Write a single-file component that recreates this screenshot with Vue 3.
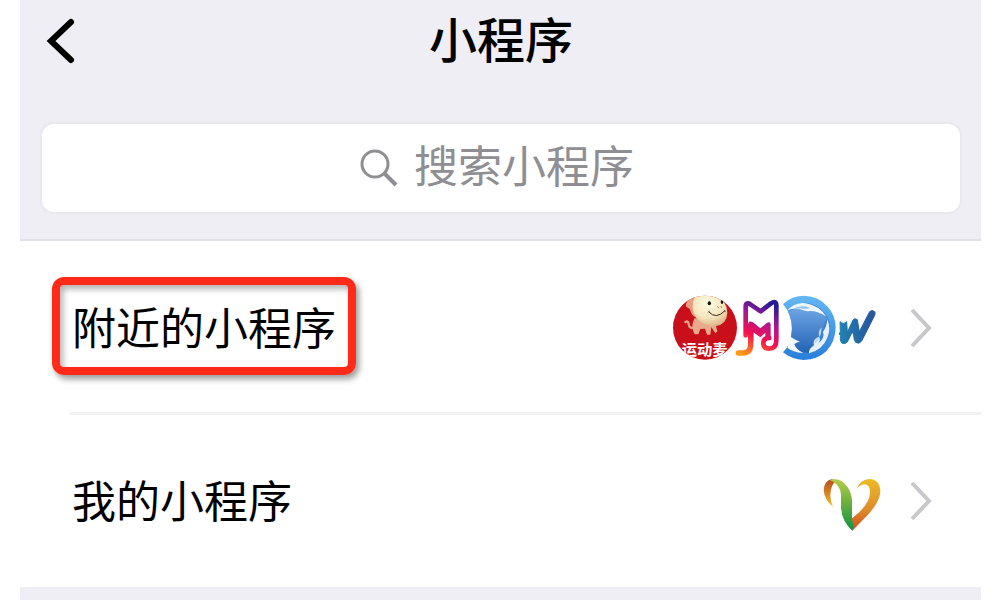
<template>
  <main class="page">
    <header class="top">
      <div class="navbar">
        <button class="back" type="button" aria-label="返回">
          <svg width="32" height="52" viewBox="0 0 32 52">
            <path d="M26 7L6 26L26 45" fill="none" stroke="#000" stroke-width="6" stroke-linecap="round" stroke-linejoin="miter" />
          </svg>
        </button>
        <h1 class="title">小程序</h1>
      </div>
      <label class="search">
        <svg class="search-icon" width="38" height="38" viewBox="0 0 38 38">
          <circle cx="15" cy="15" r="13" fill="none" stroke="#8e8e93" stroke-width="3" />
          <path d="M24 24L36 36" stroke="#8e8e93" stroke-width="4" />
        </svg>
        <input v-model="keyword" class="search-input" type="text" placeholder="搜索小程序" aria-label="搜索小程序" />
      </label>
    </header>

    <nav class="list">
      <a v-for="item in items" :key="item.label" class="row" href="#">
        <span class="label" :class="{ marked: item.marked }">{{ item.label }}</span>
        <span v-if="item.marked" class="apps">
          <!-- monkey -->
          <svg width="64" height="68" viewBox="27 27 192 204">
            <defs>
              <clipPath id="disc"><circle cx="120" cy="128" r="96" /></clipPath>
              <radialGradient id="face" cx="0.45" cy="0.3" r="0.75">
                <stop offset="0" stop-color="#fffbe2" />
                <stop offset="0.6" stop-color="#f5e5be" />
                <stop offset="1" stop-color="#d9b184" />
              </radialGradient>
            </defs>
            <circle cx="120" cy="128" r="96" fill="#c90f1a" />
            <g clip-path="url(#disc)">
              <path d="M91 128Q72 132 71 117Q70 106 61 111" fill="none" stroke="#e9a587" stroke-width="7" stroke-linecap="round" />
              <path d="M88 100Q76 127 89 148H100L106 132L120 131L126 149H136L139 126L151 145L157 139L149 108Z" fill="#eaa98b" />
              <path d="M62 64Q65 38 92 32L112 38L91 97Q79 92 75 73Z" fill="#e8a080" />
              <path d="M88 38Q110 18 150 31Q187 48 187 83Q186 117 153 123Q113 122 93 99Q76 71 88 38Z" fill="url(#face)" />
              <ellipse cx="133" cy="55" rx="5" ry="6" fill="#151515" />
              <ellipse cx="171" cy="51" rx="4" ry="6" fill="#151515" />
              <path d="M131 80Q153 105 180 77" fill="none" stroke="#3b2419" stroke-width="3" />
              <path d="M129 83L134 77M177 77L183 79M157 65L161 68M167 65L171 67" stroke="#3b2419" stroke-width="2" />
              <text x="50" y="209" class="badge-text">运动麦</text>
            </g>
          </svg>
          <!-- music note -->
          <svg width="43" height="68" viewBox="217 27 129 204">
            <defs>
              <linearGradient id="note" x1="310" y1="55" x2="235" y2="210" gradientUnits="userSpaceOnUse">
                <stop offset="0" stop-color="#261b96" />
                <stop offset="0.3" stop-color="#a31896" />
                <stop offset="0.62" stop-color="#f6104f" />
                <stop offset="1" stop-color="#ff9a13" />
              </linearGradient>
            </defs>
            <g fill="none" stroke="url(#note)" stroke-linecap="round" stroke-linejoin="round">
              <path d="M240 151V66Q240 49 254 58L285 79L316 55Q331 45 332 61V166Q332 191 311 191Q293 191 293 175Q293 159 311 159" stroke-width="14" />
              <path d="M255 125V178Q255 204 232 204H218" stroke-width="16" />
            </g>
            <path d="M247 121Q247 105 262 112L284 130L302 115Q315 107 315 121V165H299V143L284 157L263 142V170H247Z" fill="url(#note)" />
          </svg>
          <!-- blue swirl -->
          <svg width="56" height="68" viewBox="32 27 168 204">
            <defs>
              <linearGradient id="ring" x1="0" y1="0" x2="0" y2="1">
                <stop offset="0" stop-color="#64b8f2" />
                <stop offset="1" stop-color="#287fdc" />
              </linearGradient>
              <linearGradient id="globe" x1="0" y1="0" x2="0" y2="1">
                <stop offset="0" stop-color="#6fa6e4" />
                <stop offset="1" stop-color="#2263b6" />
              </linearGradient>
            </defs>
            <path d="M38 57Q64 32 103 32Q146 34 172 65Q196 91 196 128Q195 169 168 199Q141 224 100 225Q65 224 38 202L50 188Q66 164 65 128Q65 91 38 57Z" fill="url(#ring)" />
            <path d="M55 80Q72 52 106 53Q142 57 163 84Q185 110 178 144Q171 185 132 202Q98 213 66 198L51 187Q65 163 65 130Q65 98 55 80Z" fill="#3a82d0" />
            <path d="M54 81Q78 63 112 72Q148 74 171 100Q159 113 160 132Q150 132 152 149Q136 152 138 177Q122 187 118 203Q85 207 66 184L62 158Q66 135 64 112Z" fill="url(#globe)" />
            <path d="M51 76Q76 50 107 55Q147 62 168 95Q145 78 119 78Q104 80 90 73Q72 69 51 76Z" fill="#edf5fd" />
            <path d="M67 72Q91 58 118 68Q108 74 92 70Z" fill="#8dc3f2" />
            <path d="M171 102Q183 133 171 158Q158 193 116 205Q113 193 131 181Q126 162 146 155Q153 165 142 177Q165 159 158 140Q169 127 171 102Z" fill="#e6f1fc" />
            <path d="M154 127Q140 141 148 157Q132 158 133 177Q153 161 154 127Z" fill="#b9d6f5" />
            <path d="M60 155Q74 164 89 170Q74 173 72 178Q78 195 99 204Q67 201 51 188Z" fill="#f3f8fe" />
          </svg>
          <!-- w mark -->
          <svg width="45" height="68" viewBox="201 30 135 204">
            <defs>
              <linearGradient id="wave" x1="0" y1="0" x2="1" y2="0">
                <stop offset="0" stop-color="#2183b2" />
                <stop offset="0.5" stop-color="#236aa7" />
                <stop offset="1" stop-color="#29539b" />
              </linearGradient>
            </defs>
            <path d="M210 113Q221 123 230 113L232 145L249 108Q254 101 262 107L268 143L299 83Q306 76 314 83Q317 87 314 94L275 171Q267 182 257 175Q252 170 251 154L247 143L232 174Q225 182 215 177L211 168V154L207 150L211 143Z" fill="url(#wave)" stroke="url(#wave)" stroke-width="3" stroke-linejoin="round" />
          </svg>
        </span>
        <span v-else class="apps">
          <!-- ribbon heart -->
          <svg width="60" height="60" viewBox="36 20 180 180">
            <defs>
              <linearGradient id="green" x1="0" y1="0" x2="0" y2="1">
                <stop offset="0" stop-color="#b3cd47" />
                <stop offset="0.5" stop-color="#65ad3e" />
                <stop offset="1" stop-color="#0b9144" />
              </linearGradient>
              <linearGradient id="orange" x1="0" y1="0" x2="0" y2="1">
                <stop offset="0" stop-color="#edbb25" />
                <stop offset="0.6" stop-color="#de8b2b" />
                <stop offset="1" stop-color="#cf4c20" />
              </linearGradient>
              <linearGradient id="tip" x1="0" y1="0" x2="0" y2="1">
                <stop offset="0" stop-color="#bb4b1d" />
                <stop offset="1" stop-color="#f0bd2a" />
              </linearGradient>
            </defs>
            <path d="M69 128Q43 106 41 77Q43 50 64 45L80 48Q61 62 61 93Q61 111 69 128Z" fill="url(#tip)" />
            <path d="M139 76Q150 44 179 44Q207 45 211 76Q212 112 171 154L127 199L121 179L126 162Q180 121 180 84Q180 59 161 60Q148 63 139 76Z" fill="url(#orange)" />
            <path d="M60 48Q83 39 102 56Q124 75 126 108V164L131 187L127 199Q96 172 93 130V91Q90 58 60 48Z" fill="url(#green)" />
          </svg>
        </span>
        <svg class="chevron" width="23" height="40" viewBox="0 0 23 40">
          <path d="M2 2L19 20L2 38" fill="none" stroke="#c7c7cc" stroke-width="4" />
        </svg>
      </a>
    </nav>
  </main>
</template>

<script setup>
import { ref } from "vue";

const keyword = ref("");

const items = [
  { label: "附近的小程序", marked: true },
  { label: "我的小程序", marked: false },
];
</script>

<style>
body {
  background-color: #fff;
}
</style>

<style scoped>
.page {
  box-sizing: border-box;
  min-height: 100vh;
  margin: 0 19px 0 20px;
  background-color: #efeef4;
  font-family: "Noto Sans CJK SC", sans-serif;
}

.top {
  padding: 0 19px 25px 20px;
  border-bottom: 2px solid #e0dfe5;
}

.navbar {
  display: grid;
  grid-template-columns: 40px 1fr 40px;
  align-items: center;
  height: 82px;
  margin-bottom: 40px;
}

.back {
  display: flex;
  padding: 0 0 0 5px;
  border: none;
  background: none;
  cursor: pointer;
}

.title {
  margin: 0;
  padding-bottom: 8px;
  font-size: 48px;
  font-weight: 500;
  line-height: 64px;
  text-align: center;
  color: #000;
}

.search {
  display: flex;
  justify-content: center;
  align-items: center;
  gap: 16px;
  box-sizing: border-box;
  height: 92px;
  border: 2px solid #e9e8ec;
  border-radius: 14px;
  background-color: #fff;
}

.search-input {
  width: 228px;
  height: 64px;
  padding: 0 0 8px;
  border: none;
  outline: none;
  background: none;
  font-family: inherit;
  font-size: 44px;
  font-weight: 400;
  color: #000;
}

.search-input::placeholder {
  color: #8e8e93;
  opacity: 1;
}

.list {
  background-color: #fff;
}

.row {
  display: flex;
  align-items: center;
  gap: 28px;
  height: 173px;
  padding: 0 48px 0 32px;
  color: #000;
  text-decoration: none;
}

.row + .row {
  position: relative;
}

.row + .row::before {
  content: "";
  position: absolute;
  top: -2px;
  left: 50px;
  right: 0;
  height: 3px;
  background-color: #f1f1f3;
}

.label {
  margin: 0 auto 4px 0;
  padding: 8px 12px;
  border: 8px solid transparent;
  border-radius: 12px;
  font-size: 44px;
  line-height: 66px;
}

.label.marked {
  border-color: #ff2a17;
  box-shadow: 3px 4px 6px rgba(0, 0, 0, 0.4), inset 3px 4px 6px rgba(0, 0, 0, 0.3);
}

.apps {
  display: flex;
  align-items: center;
}

.apps svg {
  display: block;
  overflow: visible;
}

.badge-text {
  font-size: 46px;
  font-weight: 700;
  fill: #fff;
}
</style>
